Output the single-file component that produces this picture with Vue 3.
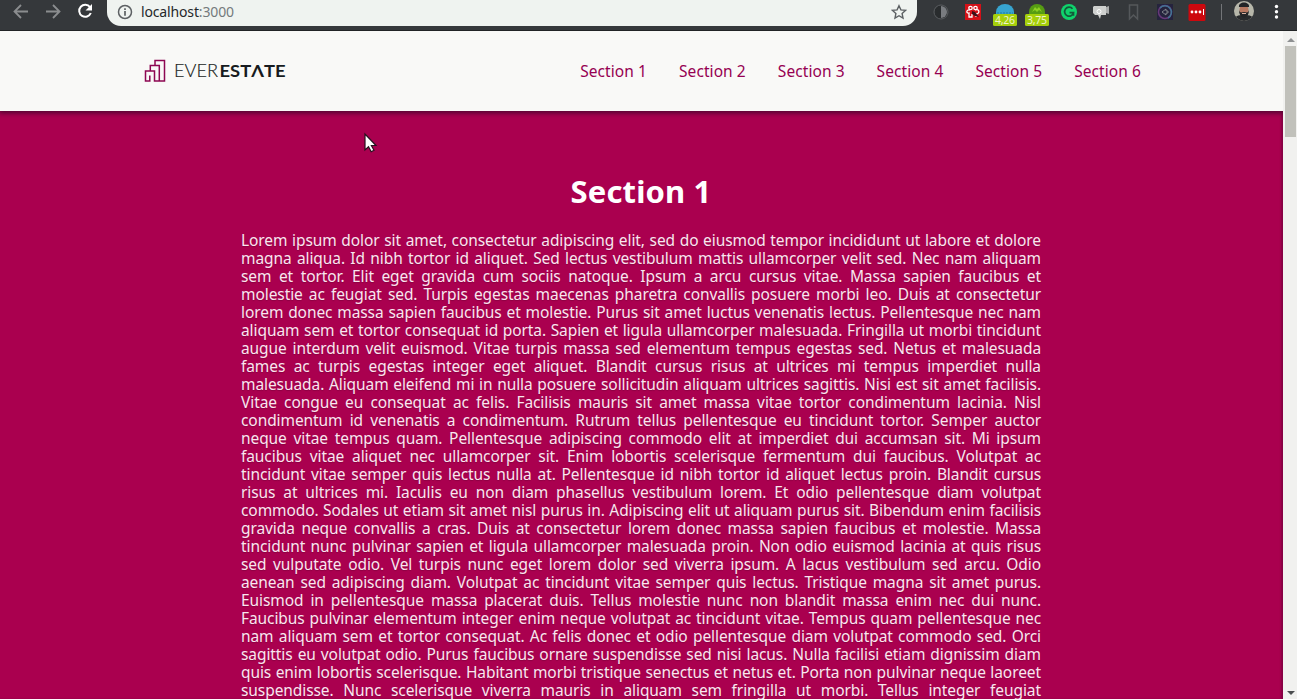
<script setup>
const links = [1, 2, 3, 4, 5, 6]
const lines = `Lorem ipsum dolor sit amet, consectetur adipiscing elit, sed do eiusmod tempor incididunt ut labore et dolore
magna aliqua. Id nibh tortor id aliquet. Sed lectus vestibulum mattis ullamcorper velit sed. Nec nam aliquam
sem et tortor. Elit eget gravida cum sociis natoque. Ipsum a arcu cursus vitae. Massa sapien faucibus et
molestie ac feugiat sed. Turpis egestas maecenas pharetra convallis posuere morbi leo. Duis at consectetur
lorem donec massa sapien faucibus et molestie. Purus sit amet luctus venenatis lectus. Pellentesque nec nam
aliquam sem et tortor consequat id porta. Sapien et ligula ullamcorper malesuada. Fringilla ut morbi tincidunt
augue interdum velit euismod. Vitae turpis massa sed elementum tempus egestas sed. Netus et malesuada
fames ac turpis egestas integer eget aliquet. Blandit cursus risus at ultrices mi tempus imperdiet nulla
malesuada. Aliquam eleifend mi in nulla posuere sollicitudin aliquam ultrices sagittis. Nisi est sit amet facilisis.
Vitae congue eu consequat ac felis. Facilisis mauris sit amet massa vitae tortor condimentum lacinia. Nisl
condimentum id venenatis a condimentum. Rutrum tellus pellentesque eu tincidunt tortor. Semper auctor
neque vitae tempus quam. Pellentesque adipiscing commodo elit at imperdiet dui accumsan sit. Mi ipsum
faucibus vitae aliquet nec ullamcorper sit. Enim lobortis scelerisque fermentum dui faucibus. Volutpat ac
tincidunt vitae semper quis lectus nulla at. Pellentesque id nibh tortor id aliquet lectus proin. Blandit cursus
risus at ultrices mi. Iaculis eu non diam phasellus vestibulum lorem. Et odio pellentesque diam volutpat
commodo. Sodales ut etiam sit amet nisl purus in. Adipiscing elit ut aliquam purus sit. Bibendum enim facilisis
gravida neque convallis a cras. Duis at consectetur lorem donec massa sapien faucibus et molestie. Massa
tincidunt nunc pulvinar sapien et ligula ullamcorper malesuada proin. Non odio euismod lacinia at quis risus
sed vulputate odio. Vel turpis nunc eget lorem dolor sed viverra ipsum. A lacus vestibulum sed arcu. Odio
aenean sed adipiscing diam. Volutpat ac tincidunt vitae semper quis lectus. Tristique magna sit amet purus.
Euismod in pellentesque massa placerat duis. Tellus molestie nunc non blandit massa enim nec dui nunc.
Faucibus pulvinar elementum integer enim neque volutpat ac tincidunt vitae. Tempus quam pellentesque nec
nam aliquam sem et tortor consequat. Ac felis donec et odio pellentesque diam volutpat commodo sed. Orci
sagittis eu volutpat odio. Purus faucibus ornare suspendisse sed nisi lacus. Nulla facilisi etiam dignissim diam
quis enim lobortis scelerisque. Habitant morbi tristique senectus et netus et. Porta non pulvinar neque laoreet
suspendisse. Nunc scelerisque viverra mauris in aliquam sem fringilla ut morbi. Tellus integer feugiat`.split('\n')
</script>

<template>
  <div class="window">
    <div class="toolbar">
      <svg class="nav-icons" width="107" height="30" fill="none" stroke-width="1.8">
        <path d="M28 11.500H15M21 5l-6.500 6.500 6.500 6.500" stroke="#8b8d8f" />
        <path d="M46 11.500h13M53 5l6.500 6.500-6.500 6.500" stroke="#8b8d8f" />
        <path d="M90 7.200a6 6 0 1 0 .8 5.800" stroke="#fff" stroke-width="2" />
        <path d="M92 4v6.500h-6.500z" fill="#fff" />
      </svg>
      <div class="address">
        <svg width="16" height="16" viewBox="0 0 16 16" fill="none" stroke="#5c6063" stroke-width="1.500">
          <circle cx="8" cy="8" r="6.500" /><path d="M8 7v4.700M8 4.200v1.700" stroke-width="1.700" />
        </svg>
        <span class="url">localhost<i>:3000</i></span>
        <svg class="star" width="16" height="16" viewBox="0 0 16 16" fill="none" stroke="#5c6063" stroke-width="1.400">
          <path d="M8 1.700l1.900 4.200 4.600.5-3.400 3.100.9 4.500L8 11.700 4 14l.9-4.500L1.500 6.400l4.600-.5z" />
        </svg>
      </div>
      <svg class="extensions" width="380" height="30" viewBox="917 0 380 30">
        <circle cx="941" cy="12" r="7" fill="#292c2e" stroke="#5a5d60" />
        <path d="M941 6a6 6 0 0 1 0 12z" fill="#797c80" />
        <rect x="965" y="4" width="16" height="16" fill="#d41118" />
        <g fill="none" stroke="#fff" stroke-width="1.300">
          <circle cx="970.500" cy="8" r="1.700" /><circle cx="975.500" cy="8" r="1.700" />
          <path d="M970 10c-4-1-4 4-1 3v4h3v-3m3-4c5-2 5 4 1 4v3" />
        </g>
        <path d="M972 11l3 1 4 5-4-1-3-2z" fill="#391319" />
        <path d="M996 12a9 8 0 0 1 18 0v3h-18z" fill="#37a4cf" />
        <path d="M997 13h16" stroke="#207e9d" stroke-dasharray="2 1" />
        <path d="M1029 12a8 8 0 0 1 16 0v3h-16z" fill="#569c13" />
        <path d="M1032 12l3-5 2 2 2-2 3 5-3-2-2 2-2-2z" fill="#8cd022" />
        <g fill="#a5cf0b">
          <rect x="993" y="14" width="24" height="12" rx="1.500" />
          <rect x="1025" y="14" width="24" height="12" rx="1.500" />
        </g>
        <g class="badge-text">
          <text x="1005" y="24" textLength="20">4,26</text>
          <text x="1037" y="24" textLength="20">3,75</text>
        </g>
        <circle cx="1069" cy="12" r="8" fill="#10d36c" />
        <path d="M1072.500 8.700a4.500 4.500 0 1 0 1 4h-4M1073.500 12.700v3" fill="none" stroke="#14593b" stroke-width="1.700" />
        <path d="M1094 6h12v9h-5l-1 4-2-4h-3l-2-2V7z" fill="#ced0ce" />
        <path d="M1106 7l3-1v8l-3-1z" fill="#a9abab" />
        <circle cx="1099" cy="11.500" r="2" fill="none" stroke="#fff" />
        <path d="M1129.500 5h8v14l-4-4-4 4z" fill="none" stroke="#55585b" stroke-width="1.500" />
        <rect x="1157" y="4" width="16" height="16" fill="#25233d" />
        <circle cx="1165" cy="12" r="6.500" fill="none" stroke="#683879" stroke-width="1.500" />
        <path d="M1160 8a6.500 6.500 0 1 1 8 10" fill="none" stroke="#417493" stroke-width="1.500" />
        <path d="M1162 12l4-3v2h2v2h-2v2z" fill="none" stroke="#92979b" stroke-width=".8" />
        <rect x="1188.500" y="4" width="17" height="17" rx="1.500" fill="#cd080e" />
        <g fill="#fff"><circle cx="1192" cy="12" r="1.400" /><circle cx="1196" cy="12" r="1.400" /><circle cx="1200" cy="12" r="1.400" /><path d="M1203 9h1v6h-1z" /></g>
        <path d="M1221.500 4v16" stroke="#737578" />
        <clipPath id="avatar"><circle cx="1244" cy="11" r="10" /></clipPath>
        <g clip-path="url(#avatar)">
          <path d="M1234 1h20v20h-20z" fill="#b7b7aa" />
          <path d="M1234 21c0-5 4-6 10-6s10 1 10 6z" fill="#292b2d" />
          <ellipse cx="1244" cy="10" rx="4.500" ry="6" fill="#b97961" />
          <path d="M1239 7c-1-6 11-6 10 0zM1239 10c1 3 2 2.500 5 2 3 .5 4 1 5-2 0 10-10 10-10 0z" fill="#242527" />
          <path d="M1242 13.500h4" stroke="#d9b0a0" />
        </g>
        <g fill="#fff"><circle cx="1276.500" cy="6.500" r="1.700" /><circle cx="1276.500" cy="11.800" r="1.700" /><circle cx="1276.500" cy="17" r="1.700" /></g>
      </svg>
    </div>
    <div class="viewport">
      <div class="page">
        <header>
          <svg class="logo" width="144" height="26" viewBox="0 0 144 26">
            <path d="M11 7.500V2.500h9.500v20.500h-10V13H1.500v10h4.300v-5.500M6.300 12.500v-5h9V23" fill="none" stroke="#8d0752" stroke-width="1.500" />
            <g class="brand">
              <text class="thin" x="30" y="19" textLength="44" lengthAdjust="spacingAndGlyphs">EVER</text>
              <text class="bold" x="75.500" y="19" textLength="66" lengthAdjust="spacingAndGlyphs">ESTΛTE</text>
            </g>
          </svg>
          <nav><a v-for="n in links" :key="n">Section {{ n }}</a></nav>
        </header>
        <main>
          <h1>Section 1</h1>
          <div class="copy"><p v-for="line in lines" :key="line">{{ line }}</p></div>
        </main>
        <svg class="cursor" width="16" height="24" viewBox="0 0 16 24">
          <path d="M2 2v16l3.500-3.200 2.700 5 2.800-1.500-2.600-4.800H13z" fill="#fff" stroke="#27111e" stroke-width="1.200" />
        </svg>
      </div>
      <div class="scrollbar">
        <i class="up"></i><div class="thumb"></div><i class="down"></i>
      </div>
    </div>
  </div>
</template>

<style>
body { overflow: hidden; }
</style>
<style scoped>
.window { width: 1297px; height: 699px; overflow: hidden; display: flex; flex-direction: column; font-family: "Noto Sans", sans-serif; }
.toolbar { flex: 0 0 31px; box-sizing: border-box; display: flex; background: #35383b; border-bottom: 1px solid #222426; }
.nav-icons, .extensions { flex: none; display: block; }
.address { box-sizing: border-box; width: 810px; height: 26px; padding: 0 10px 2px; display: flex; align-items: center; background: #eff3f0; border-radius: 0 0 14px 14px; }
.url { margin-left: 8px; font-size: 14px; line-height: 20px; letter-spacing: -.15px; color: #25282a; }
.url i { font-style: normal; color: #747a7c; }
.star { margin-left: auto; }
.badge-text { font: 10.500px "Noto Sans", sans-serif; fill: #f0f4cc; text-anchor: middle; }
.viewport { flex: 1; min-height: 0; display: flex; }
.page { position: relative; width: 1283px; overflow: hidden; background: #aa004f; box-shadow: inset -2px 0 2px #850044; }
header { position: relative; height: 80px; box-sizing: border-box; padding: 0 142px 0 144px; display: flex; align-items: center; justify-content: space-between; background: #f9f9f7; box-shadow: 0 1px 5px 1px rgba(35, 8, 35, .7); }
.brand { font-family: Lato, sans-serif; font-size: 17px; fill: #171b20; }
.thin { font-weight: 300; stroke: #171b20; stroke-width: .15; }
.bold { font-weight: 700; }
nav { display: flex; gap: 32px; }
nav a { width: 66.800px; font-size: 15.500px; line-height: 18px; letter-spacing: .07px; white-space: nowrap; color: #960052; }
main { width: 800px; margin: 60px 0 0 241px; color: #fbe5ef; }
h1 { margin: 0 0 20px; font-size: 31px; line-height: 40px; text-align: center; letter-spacing: .15px; color: #fff; }
.copy { text-shadow: 0 1px 1px rgba(70, 0, 40, .3); }
.copy p { margin: 0; height: 18px; font-size: 15.500px; line-height: 18px; letter-spacing: -.08px; word-spacing: -1px; white-space: nowrap; text-align: justify; text-align-last: justify; }
.cursor { position: absolute; left: 363px; top: 101px; }
.scrollbar { flex: 0 0 14px; box-sizing: border-box; padding: 7px 1px 4px 2px; display: flex; flex-direction: column; align-items: center; background: #f1f1ef; }
.up, .down { width: 0; height: 0; border: 4px solid transparent; }
.up { border-top: 0; border-bottom-color: #8e9092; }
.thumb { width: 11px; height: 91px; margin-top: 4px; background: #c1c1bb; }
.down { margin-top: auto; border-bottom: 0; border-top-color: #4c4e50; }
</style>
